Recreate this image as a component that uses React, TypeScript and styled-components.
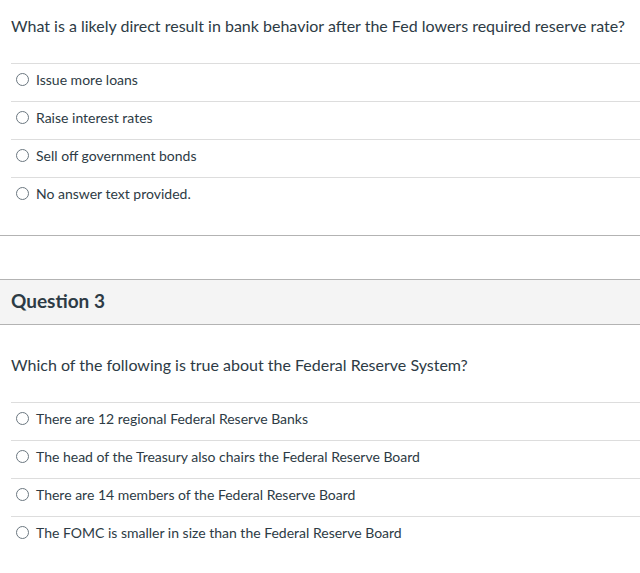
import React from "react";
import styled, { createGlobalStyle } from "styled-components";

const Global = createGlobalStyle`
  html, body { margin: 0; padding: 0; background: #ffffff; }
  body { font-family: Lato, "Open Sans", "Liberation Sans", sans-serif; color: #2d3b45; }
`;

const Page = styled.div`
  width: 640px;
  display: flex;
  flex-direction: column;
`;

const QuestionBlock = styled.section<{ $last?: boolean }>`
  display: flex;
  flex-direction: column;
  border-bottom: ${(p) => (p.$last ? "none" : "1px solid #b3b3b3")};
  margin-bottom: ${(p) => (p.$last ? "0" : "43px")};
`;

const Header = styled.header`
  height: 46px;
  box-sizing: border-box;
  display: flex;
  align-items: center;
  padding: 0 11px 3px;
  background: #f4f4f4;
  border-top: 1px solid #b3b3b3;
  border-bottom: 1px solid #b3b3b3;
`;

const Title = styled.h2`
  margin: 0;
  font-size: 19px;
  font-weight: 700;
  color: #2d3b45;
`;

const Body = styled.div<{ $top: number }>`
  padding: ${(p) => p.$top}px 0 20px 11px;
  display: flex;
  flex-direction: column;
`;

const Prompt = styled.p`
  margin: 0 0 26px;
  font-size: 16px;
  line-height: 22px;
  color: #2d3b45;
`;

const Answers = styled.ul`
  list-style: none;
  margin: 0;
  padding: 0;
`;

const Answer = styled.li`
  height: 38px;
  box-sizing: border-box;
  border-top: 1px solid #dddddd;
  display: flex;
  align-items: center;
  gap: 7px;
  padding: 0 0 6px 5px;
  font-size: 14px;
  color: #2d3b45;
`;

const Radio = styled.span`
  width: 13px;
  height: 13px;
  box-sizing: border-box;
  border: 1px solid #6b7780;
  border-radius: 50%;
  flex: none;
  background: #fff;
`;

type Q = { title?: string; prompt: string; answers: string[]; top: number };

const questions: Q[] = [
  {
    prompt:
      "What is a likely direct result in bank behavior after the Fed lowers required reserve rate?",
    answers: [
      "Issue more loans",
      "Raise interest rates",
      "Sell off government bonds",
      "No answer text provided.",
    ],
    top: 15,
  },
  {
    title: "Question 3",
    prompt: "Which of the following is true about the Federal Reserve System?",
    answers: [
      "There are 12 regional Federal Reserve Banks",
      "The head of the Treasury also chairs the Federal Reserve Board",
      "There are 14 members of the Federal Reserve Board",
      "The FOMC is smaller in size than the Federal Reserve Board",
    ],
    top: 29,
  },
];

export default function App() {
  return (
    <Page>
      <Global />
      {questions.map((q, i) => (
        <QuestionBlock key={i} $last={i === questions.length - 1}>
          {q.title && (
            <Header>
              <Title>{q.title}</Title>
            </Header>
          )}
          <Body $top={q.top}>
            <Prompt>{q.prompt}</Prompt>
            <Answers>
              {q.answers.map((a) => (
                <Answer key={a}>
                  <Radio />
                  <span>{a}</span>
                </Answer>
              ))}
            </Answers>
          </Body>
        </QuestionBlock>
      ))}
    </Page>
  );
}
